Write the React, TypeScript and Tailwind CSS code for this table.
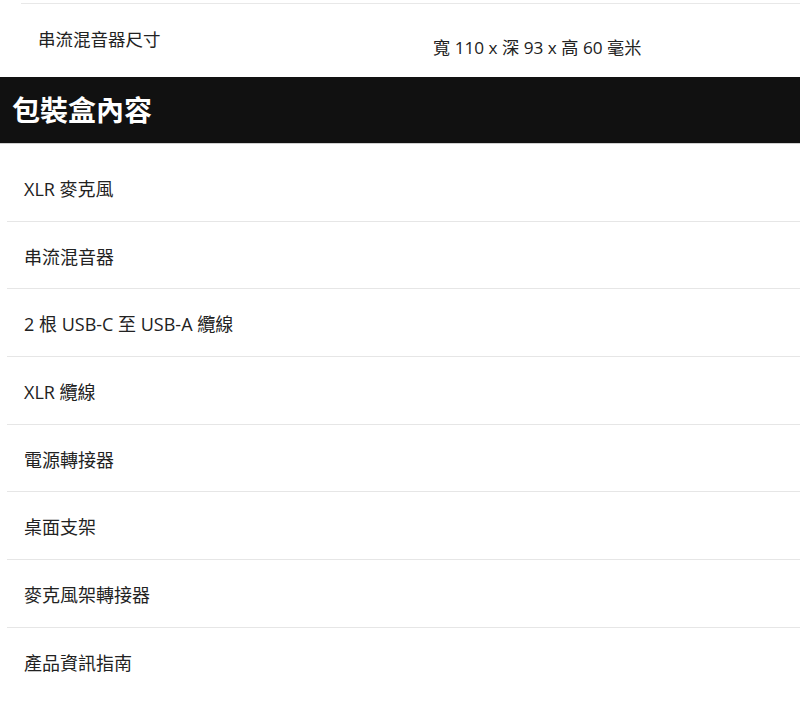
const items = [
  'XLR 麥克風',
  '串流混音器',
  '2 根 USB-C 至 USB-A 纜線',
  'XLR 纜線',
  '電源轉接器',
  '桌面支架',
  '麥克風架轉接器',
  '產品資訊指南',
]

export default function App() {
  return (
    <div
      className="min-h-[727px] bg-white text-[#222]"
      style={{ fontFamily: '"Open Sans", "Noto Sans CJK TC", sans-serif' }}
    >
      <div className="ml-[21px] mt-[3px] flex h-[74px] border-t border-[#e8e8e8]">
        <div className="w-[412px] pl-[17px] pt-[23px] text-[17.5px] leading-[24px]">串流混音器尺寸</div>
        <div className="pt-[32px] text-[17.2px] leading-[24px]">寬 110 x 深 93 x 高 60 毫米</div>
      </div>

      <div className="flex h-[67px] items-center border-b border-[#cfcfcf] bg-[#111] pl-[12px]">
        <h2 className="text-[28px] font-bold leading-none text-white">包裝盒內容</h2>
      </div>

      <ul className="ml-[7px] pt-[10px]">
        {items.map((item, i) => (
          <li
            key={item}
            className={`pl-[17px] pt-[23px] pb-[19.7px] text-[18px] leading-[24px] ${
              i < items.length - 1 ? 'border-b border-[#e6e6e6]' : ''
            }`}
          >
            {item}
          </li>
        ))}
      </ul>
    </div>
  )
}
